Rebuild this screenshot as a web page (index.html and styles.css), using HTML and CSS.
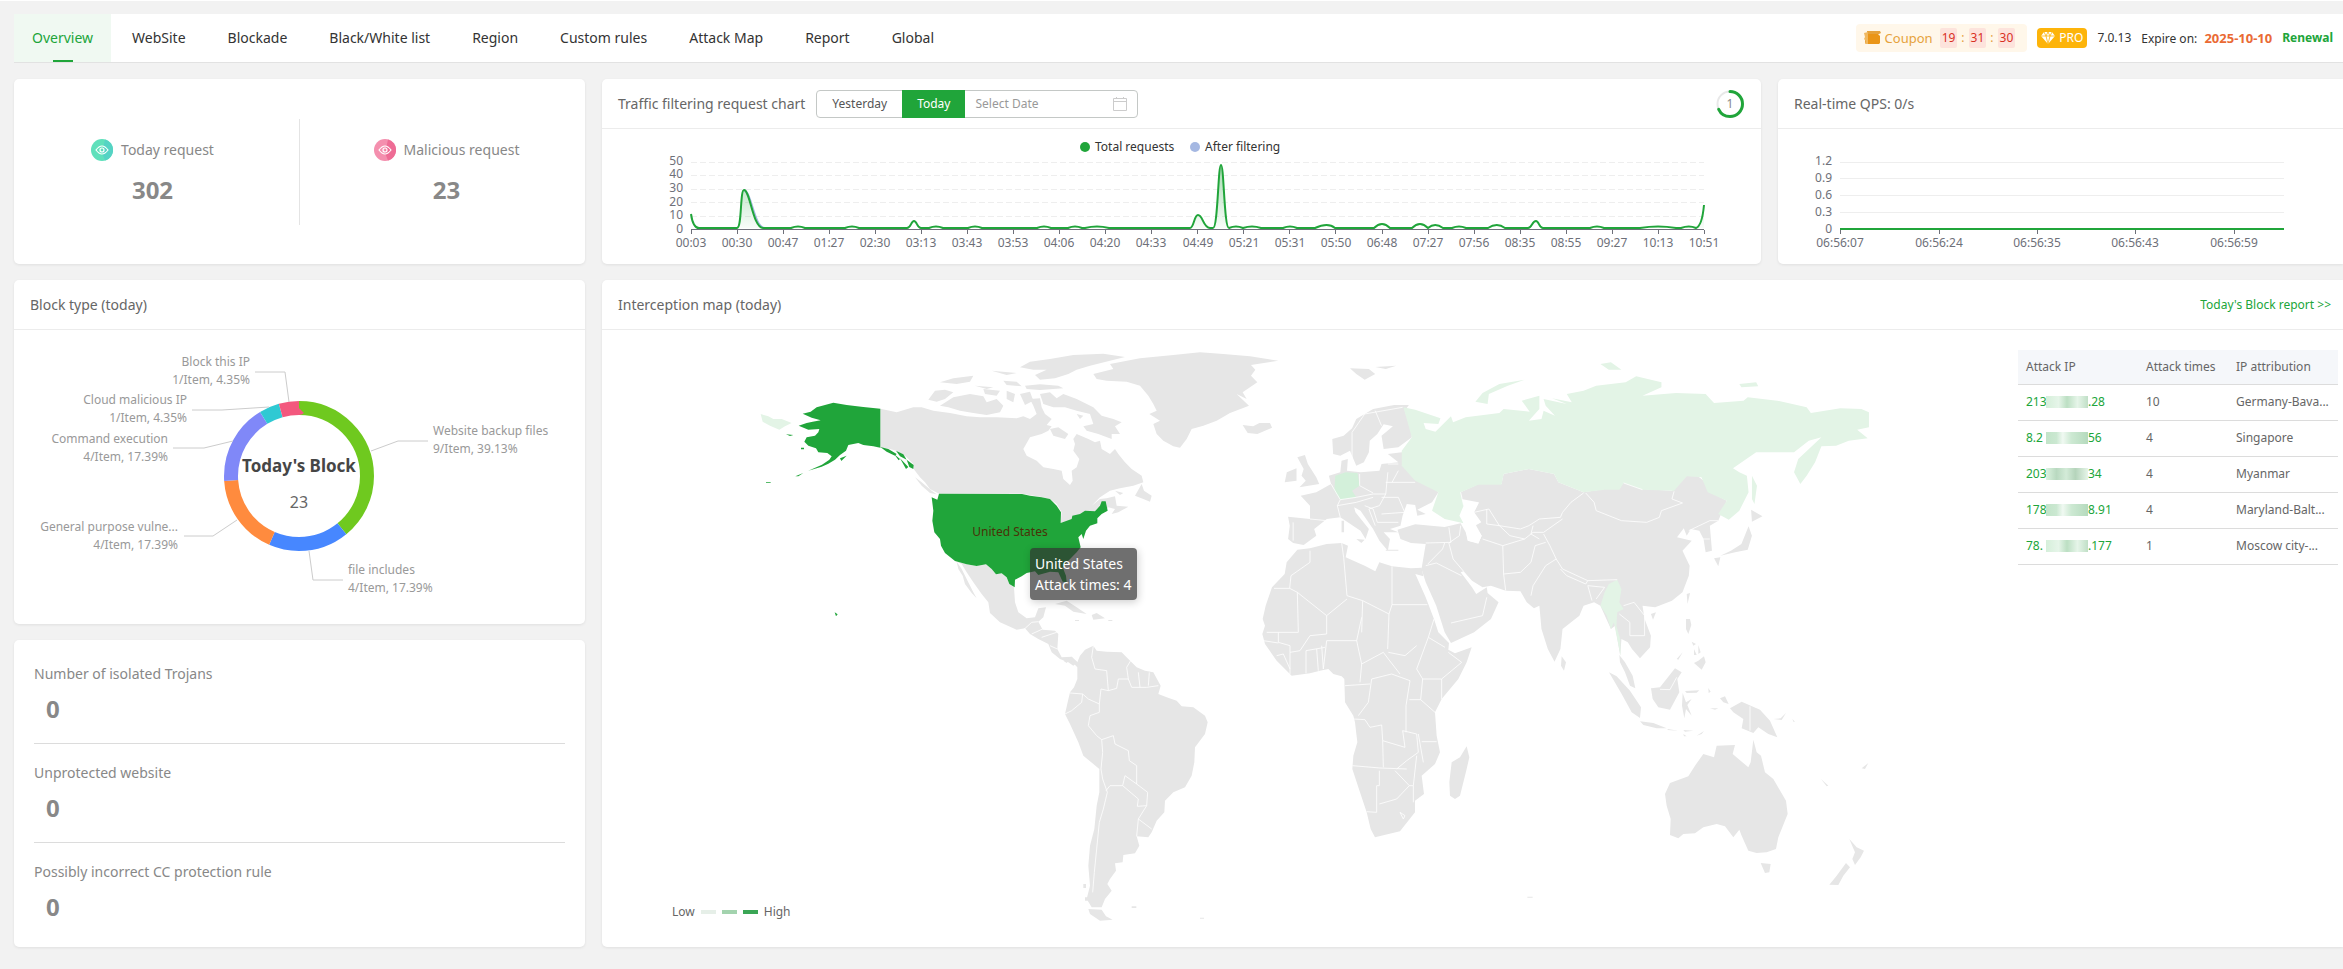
FILE: index.html
```html
<!DOCTYPE html>
<html lang="en">
<head>
<meta charset="utf-8">
<title>WAF Overview</title>
<link rel="stylesheet" href="styles.css">
</head>
<body>
<header class="topbar">
  <nav class="tabs">
    <a href="#" class="tab active">Overview</a>
    <a href="#" class="tab">WebSite</a>
    <a href="#" class="tab">Blockade</a>
    <a href="#" class="tab">Black/White list</a>
    <a href="#" class="tab">Region</a>
    <a href="#" class="tab">Custom rules</a>
    <a href="#" class="tab">Attack Map</a>
    <a href="#" class="tab">Report</a>
    <a href="#" class="tab">Global</a>
  </nav>
  <div class="license">
    <div class="coupon">
      <svg width="17" height="14" viewBox="0 0 17 14" aria-hidden="true"><path d="M1 3h2v9H1zM3 0h13l1 2-2 1H5L3 4z" fill="#e6a23c"/><path d="M0 2l4-1v12H1l1-3-2-2 1-2z" fill="#f0b860"/><path d="M4 3h10l2 2v7l-1 1H4z" fill="#ea9518"/></svg>
      <span class="coupon-name">Coupon</span>
      <span class="count">19</span><span>:</span><span class="count">31</span><span>:</span><span class="count">30</span>
    </div>
    <span class="pro"><svg width="14" height="12" viewBox="0 0 14 12" aria-hidden="true"><path d="M3 0h8l3 4-7 8-7-8z" fill="#fff"/><path d="M0 4h14M3 0l2 4 2 8 2-8 2-4M5 4l2-4 2 4" fill="none" stroke="#fdb40a" stroke-width=".8"/></svg>PRO</span>
    <span>7.0.13</span>
    <span class="expire">Expire on: <b class="date">2025-10-10</b></span>
    <a href="#" class="renew">Renewal</a>
  </div>
</header>

<main class="board">
  <section class="card totals">
    <div class="total">
      <div class="total-name">
        <svg width="22" height="22" viewBox="0 0 22 22" aria-hidden="true"><circle cx="11" cy="11" r="11" fill="#5fe0bb"/><path d="M14 .4a11 11 0 0 1 0 21.2L11 14z" fill="#55d3c4"/><path d="M5 11q6-8 12 0q-6 8-12 0z" fill="none" stroke="#fff" stroke-width="1.2"/><circle cx="11" cy="11" r="2" fill="none" stroke="#fff" stroke-width="1.2"/></svg>
        Today request
      </div>
      <div class="figure">302</div>
    </div>
    <div class="total">
      <div class="total-name">
        <svg width="22" height="22" viewBox="0 0 22 22" aria-hidden="true"><circle cx="11" cy="11" r="11" fill="#f48fae"/><path d="M14 .4a11 11 0 0 1 0 21.2L11 14z" fill="#ee6c95"/><path d="M5 11q6-8 12 0q-6 8-12 0z" fill="none" stroke="#fff" stroke-width="1.2"/><circle cx="11" cy="11" r="2" fill="none" stroke="#fff" stroke-width="1.2"/></svg>
        Malicious request
      </div>
      <div class="figure">23</div>
    </div>
  </section>

  <section class="card">
    <div class="card-head">
      <h2>Traffic filtering request chart</h2>
      <div class="range">
        <button type="button">Yesterday</button><button type="button" class="on">Today</button>
        <label class="date-field"><input type="text" placeholder="Select Date" aria-label="Select Date"><svg width="14" height="14" viewBox="0 0 14 14" aria-hidden="true"><path d="M.5 1.5h13v12H.5zM.5 4.5h13M3.500 0v2M10.500 0v2" fill="none" stroke="#ccc"/></svg></label>
      </div>
      <svg class="ring" width="28" height="28" viewBox="0 0 28 28"><circle cx="14" cy="14" r="12.500" fill="none" stroke="#e8e8e8" stroke-width="2"/><circle cx="14" cy="14" r="12.500" fill="none" stroke="#20a53a" stroke-width="3" stroke-linecap="round" pathLength="100" stroke-dasharray="68 100" transform="rotate(-90 14 14)"/><text x="14" y="18" text-anchor="middle" font-size="12" fill="#888">1</text></svg>
    </div>
    <svg class="chart" id="traffic" viewBox="602 129 1159 135">
      <defs><linearGradient id="fade" x1="0" y1="0" x2="0" y2="1"><stop offset="0" stop-color="#20a53a" stop-opacity=".4"/><stop offset="1" stop-color="#20a53a" stop-opacity=".03"/></linearGradient></defs>
      <circle cx="1085" cy="147" r="5" fill="#20a53a"/><text class="key" x="1095" y="151">Total requests</text>
      <circle cx="1195" cy="147" r="5" fill="#a5b8e2"/><text class="key" x="1205" y="151">After filtering</text>
      <path class="grid dashed" d="M691 162.500H1704M691 175.500H1704M691 189.500H1704M691 202.500H1704M691 216.500H1704"/>
      <g class="end"><text x="683" y="165">50</text><text x="683" y="178">40</text><text x="683" y="192">30</text><text x="683" y="206">20</text><text x="683" y="219">10</text><text x="683" y="233">0</text></g>
      <path d="M691 229.500H1704" stroke="#6e7079" fill="none"/>
      <path class="tick" d="M691.500 230v4M737.500 230v4M783.500 230v4M829.500 230v4M875.500 230v4M921.500 230v4M967.500 230v4M1013.500 230v4M1059.500 230v4M1105.500 230v4M1151.500 230v4M1197.500 230v4M1243.500 230v4M1289.500 230v4M1335.500 230v4M1382.500 230v4M1428.500 230v4M1474.500 230v4M1520.500 230v4M1566.500 230v4M1612.500 230v4M1658.500 230v4M1704.500 230v4"/>
      <path d="M738 228C742 228 741 190 744 190C750 190 753 228 763 228zM1190 228C1194 228 1194 216 1198 216C1203 216 1203 228 1210 228zM1214 228C1218 228 1218 165 1221 165C1224 165 1224 228 1228 228zM1696 228Q1702 228 1704 205V228z" fill="url(#fade)"/>
      <path d="M744 190C752 193 754 228 765 228" fill="none" stroke="#a5b8e2" stroke-width="2"/>
      <path d="M691 214Q693 228 699 228H737C742 228 740 190 744 190C750 190 753 228 763 228H791Q798 225 805 228H845Q852 225 859 228H907C911 228 911 221 914 221C917 221 917 228 921 228H929Q936 225 943 228H968Q975 225 982 228H1037Q1044 225 1051 228H1068Q1075 225 1082 228H1085Q1097 225 1109 228H1190C1194 228 1194 215 1198 215C1203 215 1203 228 1210 228H1213C1218 228 1218 165 1221 165C1224 165 1224 228 1229 228Q1236 225 1243 228Q1252 225 1261 228H1283Q1290 225 1297 228H1315Q1328 222 1335 228H1374Q1382 220 1390 228H1412Q1420 220 1428 228Q1435 222 1443 228H1452Q1459 225 1466 228H1488Q1497 222 1505 228H1528C1532 228 1532 221 1536 221C1539 221 1539 228 1543 228H1590Q1597 225 1604 228H1640Q1658 225 1676 228H1681Q1689 225 1696 228Q1702 226 1704 205" fill="none" stroke="#20a53a" stroke-width="2"/>
      <g class="mid"><text x="691" y="247">00:03</text><text x="737" y="247">00:30</text><text x="783" y="247">00:47</text><text x="829" y="247">01:27</text><text x="875" y="247">02:30</text><text x="921" y="247">03:13</text><text x="967" y="247">03:43</text><text x="1013" y="247">03:53</text><text x="1059" y="247">04:06</text><text x="1105" y="247">04:20</text><text x="1151" y="247">04:33</text><text x="1198" y="247">04:49</text><text x="1244" y="247">05:21</text><text x="1290" y="247">05:31</text><text x="1336" y="247">05:50</text><text x="1382" y="247">06:48</text><text x="1428" y="247">07:27</text><text x="1474" y="247">07:56</text><text x="1520" y="247">08:35</text><text x="1566" y="247">08:55</text><text x="1612" y="247">09:27</text><text x="1658" y="247">10:13</text><text x="1704" y="247">10:51</text></g>
    </svg>
  </section>

  <section class="card edge">
    <div class="card-head"><h2>Real-time QPS: 0/s</h2></div>
    <svg class="chart" viewBox="1778 129 565 135">
      <path class="grid" d="M1840 162.500H2284M1840 178.500H2284M1840 195.500H2284M1840 212.500H2284"/>
      <path d="M1840.500 230v4M1939.500 230v4M2037.500 230v4M2135.500 230v4M2234.500 230v4" class="tick"/>
      <path d="M1840 229H2284" stroke="#20a53a" stroke-width="2"/>
      <g class="end"><text x="1832" y="165">1.2</text><text x="1832" y="182">0.9</text><text x="1832" y="199">0.6</text><text x="1832" y="216">0.3</text><text x="1832" y="233">0</text></g>
      <g class="mid"><text x="1840" y="247">06:56:07</text><text x="1939" y="247">06:56:24</text><text x="2037" y="247">06:56:35</text><text x="2135" y="247">06:56:43</text><text x="2234" y="247">06:56:59</text></g>
    </svg>
  </section>

  <section class="card">
    <div class="card-head"><h2>Block type (today)</h2></div>
    <svg class="chart donut" viewBox="14 331 571 293">
      <g fill="none" stroke-width="14" transform="rotate(-90 299 477)">
        <circle cx="299" cy="477" r="68" pathLength="23" stroke="#6fc91f" stroke-dasharray="9 14"/>
        <circle cx="299" cy="477" r="68" pathLength="23" stroke="#4787ff" stroke-dasharray="4 19" stroke-dashoffset="-9"/>
        <circle cx="299" cy="477" r="68" pathLength="23" stroke="#ff8b3e" stroke-dasharray="4 19" stroke-dashoffset="-13"/>
        <circle cx="299" cy="477" r="68" pathLength="23" stroke="#8088f8" stroke-dasharray="4 19" stroke-dashoffset="-17"/>
        <circle cx="299" cy="477" r="68" pathLength="23" stroke="#2fc9d3" stroke-dasharray="1 22" stroke-dashoffset="-21"/>
        <circle cx="299" cy="477" r="68" pathLength="23" stroke="#f3587e" stroke-dasharray="1 22" stroke-dashoffset="-22"/>
      </g>
      <path d="M371 452L398 442H428M289 403L285 373H255M269 408L222 411H192M233 442L204 449H173M237 521L213 537H184M309 552L313 581H343" fill="none" stroke="#ccc"/>
      <text x="433" y="436">Website backup files</text><text x="433" y="454">9/Item, 39.13%</text>
      <text x="348" y="575">file includes</text><text x="348" y="593">4/Item, 17.39%</text>
      <g class="end"><text x="250" y="367">Block this IP</text><text x="250" y="385">1/Item, 4.35%</text>
      <text x="187" y="405">Cloud malicious IP</text><text x="187" y="423">1/Item, 4.35%</text>
      <text x="168" y="444">Command execution</text><text x="168" y="462">4/Item, 17.39%</text>
      <text x="178" y="532">General purpose vulne...</text><text x="178" y="550">4/Item, 17.39%</text></g>
      <g class="mid"><text class="hub" x="299" y="473">Today's Block</text><text class="hub-count" x="299" y="509">23</text></g>
    </svg>
  </section>

  <section class="card map-card edge">
    <div class="card-head"><h2>Interception map (today)</h2><a href="#" class="report">Today's Block report &gt;&gt;</a></div>
    <div class="map-body">
      <div class="map">
        <svg class="chart world" viewBox="602 331 1416 617">
          <!-- North America -->
          <g transform="translate(740 340) scale(.33333)">
            <path class="land" d="M421 209L470 220L520 205L545 205L580 215L630 222L680 232L720 235L770 235L830 238L850 232L870 240L890 225L880 200L870 180L900 178L905 205L915 225L935 240L920 258L935 262L925 275L905 285L870 295L850 330L860 350L890 365L910 385L940 390L965 395L970 420L990 438L998 425L995 395L1010 385L1018 360L1000 335L1005 315L1000 300L1010 285L1045 300L1065 310L1080 305L1085 330L1110 345L1125 330L1135 345L1155 370L1175 390L1205 410L1210 430L1180 440L1140 448L1110 455L1080 475L1055 500L1080 480L1100 478L1125 472L1130 500L1165 503L1135 520L1115 525L1125 510L1105 505L1090 520L1000 545L962 552L965 520L950 495L930 480L905 474L846 464L597 464L570 450L555 430L540 415L521 390L520 375L500 355L470 335L440 328L421 326Z
            M1185 470L1205 435L1212 455L1235 470L1230 488L1210 480ZM1125 455L1150 462L1140 468Z
            M565 182L585 155L615 152L640 160L615 180L590 188ZM600 200L640 175L690 165L730 172L740 190L770 180L790 200L780 220L740 228L700 222L660 215L625 205Z
            M600 130L640 118L700 110L690 128L650 135ZM705 140L760 145L740 150ZM755 95L830 102L800 108ZM790 125L830 128L845 142L800 138ZM730 150L780 155L770 170L735 165ZM800 155L825 165L820 190L800 180ZM840 165L870 158L880 185L855 198Z
            M855 140L900 136L955 140L970 148L900 153L860 150Z
            M840 85L870 68L930 60L1000 48L1090 44L1155 54L1110 65L1050 80L1010 92L985 105L945 118L900 122L885 108L920 92L880 92Z
            M900 165L930 160L950 178L970 165L1010 180L1060 205L1085 230L1120 240L1145 250L1125 262L1140 285L1115 285L1115 300L1075 285L1040 275L1030 262L1060 255L1050 225L1010 215L975 205L940 205L910 195Z
            M930 270L955 265L985 285L975 300L940 290ZM1010 225L1030 230L1020 240ZM525 415L545 430L575 455L590 466L570 462L545 440Z
            M1060 105L1120 90L1110 75L1200 58L1300 48L1380 40L1450 45L1530 52L1615 65L1533 78L1546 92L1533 110L1552 130L1508 160L1520 180L1490 165L1527 200L1470 222L1430 245L1390 260L1355 270L1340 300L1320 326L1300 322L1270 305L1250 285L1240 255L1260 245L1228 225L1250 215L1240 195L1225 170L1200 140L1160 128L1100 125L1070 120Z
            M645 666L680 676L710 681L738 676L755 690L768 706L785 703L800 715L808 735L822 745L825 790L835 820L860 838L885 835L895 808L918 805L910 835L895 848L908 872L945 875L955 885L952 930L965 955L995 953L1012 970L1000 980L985 970L960 960L935 940L925 915L895 900L870 885L855 868L830 872L780 850L750 822L745 790L725 765L700 730L680 700L665 675Z
            M650 668L665 690L680 720L700 760L710 778L695 762L675 735L668 710L655 690ZM945 795L980 785L1010 805L1040 825L1000 818L975 800ZM1055 828L1070 822L1095 838L1060 842ZM1005 843h12v3h-12zM1105 843h12v3h-12z"/>
            <path class="hot" d="M188 224L212 218L230 205L255 198L280 191L320 198L370 204L421 209L421 326L400 322L370 318L355 312L325 318L318 335L300 348L285 362L265 374L245 383L205 395L246 377L268 362L275 352L262 342L235 340L228 328L205 320L193 308L200 295L225 290L235 280L238 270L205 272L176 260L200 252L218 248L242 244L215 236Z
            M421 324L445 330L470 345L465 350L440 338ZM468 335L490 346L500 362L480 352ZM500 362L521 378L520 390L508 384ZM462 345L480 360L476 364ZM480 358L505 384L498 390ZM300 358L320 350L304 366ZM138 286L160 288L150 291ZM166 412L190 402L175 412ZM78 430h14v2h-14zM183 326h9v5h-9zM284 820L293 826L288 832Z
            M597 464L846 465L870 470L905 475L930 480L950 500L963 520L962 552L995 540L997 530L1020 525L1035 515L1065 517L1080 500L1085 487L1097 487L1103 515L1085 525L1072 538L1072 553L1050 560L1038 575L1030 600L1025 585L1015 595L1022 625L1010 640L985 665L968 685L978 710L980 730L968 728L955 700L930 698L895 708L885 697L860 702L845 712L825 722L824 745L808 735L800 715L785 703L768 706L755 690L738 676L710 681L680 676L645 666L615 642L603 620L600 600L583 580L577 545L580 515L575 475L592 482Z"/>
            <path class="cool" d="M62 225L85 232L100 240L125 240L155 252L135 262L118 272L90 260L68 248Z"/>
            <path class="edge-line" d="M850 873L875 850L895 848M875 885L908 870M905 895L950 880M930 920L952 930"/>
          </g>
          <!-- South America, Africa -->
          <g transform="translate(1000 620) scale(.33333)">
            <path class="land" d="M232 130L240 110L255 92L280 80L290 95L320 98L365 100L385 120L410 145L435 155L460 160L482 200L475 225L500 235L530 245L545 262L580 265L615 290L623 310L615 345L585 385L583 430L575 470L555 505L520 520L495 545L493 580L470 605L455 640L445 655L410 652L418 680L405 703L370 708L368 730L345 733L348 755L330 780L322 795L335 815L315 840L305 865L275 865L260 840L270 800L265 740L270 680L283 630L290 560L298 520L298 450L250 410L235 370L210 315L195 285L203 250L210 220L222 205L232 180L232 145L210 122L200 132L190 125L215 113Z
            M265 870L305 872L318 892L338 902L300 905L270 885ZM395 862h14v5h-14zM250 795h8v12h-8zM255 835h10v10h-10zM600 896h12v3h-12z
            M892 -208L930 -212L980 -225L1025 -228L1044 -220L1037 -185L1094 -160L1126 -143L1138 -170L1176 -158L1233 -152L1265 -154L1270 -128L1246 -135L1277 -65L1302 0L1315 40L1347 72L1345 92L1365 103L1415 85L1400 130L1375 180L1325 240L1305 280L1310 350L1320 400L1305 435L1265 470L1272 525L1245 545L1245 580L1200 637L1125 655L1112 630L1100 580L1080 520L1057 450L1060 410L1072 370L1065 310L1060 290L1035 250L1033 180L1025 172L1000 165L985 150L960 155L930 163L875 170L830 125L795 75L787 45L795 20L788 0L797 -40L816 -95L854 -135L860 -170Z
            M1400 382L1408 415L1400 450L1380 530L1365 540L1350 530L1348 490L1355 430L1380 415Z"/>
            <path class="edge-line" d="M303 450L308 480L322 520L310 570L298 610L290 690L283 760L278 820M303 450L308 400L305 362L340 350L345 375L385 395L388 425L410 440L410 495L375 470L368 500L330 500L318 515M368 500L415 540L412 562L440 560L443 520L410 495M440 560L415 600L410 652M415 600L455 630M305 362L290 350L265 320L270 290L298 280L298 255L265 240L248 225L210 222M298 255L303 210L325 215L320 155L285 150L275 115L280 80M325 215L350 208L355 180L385 180L395 205L440 205L475 200M385 180L380 145L392 125M420 205L415 160M445 200L448 160M195 285L215 275L245 250L248 225
            M1057 440L1140 447L1220 450M1138 455V500H1130V580L1100 578M1138 555L1190 540L1228 500L1185 455M1228 500L1240 500L1250 410M1240 500V550M1060 300L1095 302L1110 325L1145 318L1148 365L1150 445M1148 365L1215 385L1208 335L1250 345L1255 400L1220 425L1190 450M1255 345L1270 430M1265 368H1310M1218 340V260L1230 185L1175 165L1115 180L1105 250L1075 290M1228 242H1262L1305 280M1262 242L1268 180H1325V240M1268 180L1250 150L1285 55L1335 85M1325 180L1385 130L1345 100M1085 135L1150 100L1165 120L1200 165M1080 190L1085 135L1070 65M1035 200L1110 195M970 150L980 65H1070L1085 -5M1176 -158V-43H1282M1176 -43L1167 -15L1163 90M1088 -55L1085 40M1025 -228L1031 -185L1041 -70L1088 -55L1167 -15M980 -10L1041 -60M892 -80L980 -10M892 -80L895 40H800M980 -10V45L930 50M930 -205V-170L873 -130L869 -92H822M869 -92L892 -80M835 40V70L870 80V100L900 95L930 50M870 100V165M918 95V163M950 90L955 155M965 80L970 150M918 95L975 85M790 65L835 72M830 110L850 105L870 150M1165 100L1215 110L1250 80M1302 0L1285 55M1210 600L1200 580L1215 590Z"/>
          </g>
          <!-- Europe and Asia -->
          <g transform="translate(1230 340) scale(.42092 .33333)">
            <path class="land" d="M245 345L243 300L270 290L290 268L300 240L340 210L390 198L425 198L415 215L430 260L432 295L400 325L365 330L360 290L387 262L365 256L350 285L332 305L330 340L318 370L300 380L285 335L262 350Z
            M138 533L190 540L190 500L168 470L205 460L240 435L235 410L262 400L265 365L280 360L278 395L310 400L355 395L360 375L400 370L375 345L408 340L440 400L495 460L480 490L445 512L465 525L445 530L440 498L420 495L410 530L405 560L380 570L400 580L365 580L380 600L375 635L355 605L340 570L310 515L295 505L298 520L330 570L322 600L310 575L262 535L230 540L200 570L205 590L175 618L150 612L138 600L142 560Z
            M160 355L178 348L185 375L205 415L212 435L165 445L180 425L170 410L175 390ZM130 430L135 400L158 388L158 425ZM30 258L55 262L70 252L95 252L100 266L65 285L42 282ZM285 88L330 90L345 105L320 122L300 105ZM345 84L395 80L370 90ZM265 545h6v35h-6zM300 600L320 602L312 612ZM370 632h30v3h-30z
            M398 572L440 556L510 564L548 553L560 580L565 605L590 612L598 590L585 560L575 520L590 490L550 480L548 460L590 435L645 435L650 405L710 390L770 405L780 430L840 460L890 450L925 450L935 430L980 450L1050 455L1085 410L1110 410L1130 430L1135 455L1180 485L1160 545L1140 560L1145 635L1130 640L1125 600L1115 575L1095 570L1085 590L1078 568L1062 595L1097 605L1075 635L1092 680L1090 710L1075 760L1050 785L1010 805L980 800L985 840L1000 890L998 925L974 958L955 930L945 910L930 900L927 950L915 860L905 870L880 800L865 790L840 800L830 830L790 870L785 930L771 968L755 930L740 870L735 800L722 808L705 790L690 757L655 755L620 740L600 745L575 725L555 697L548 700L575 745L585 765L610 745L612 762L638 790L620 840L580 880L525 912L510 880L490 800L465 730L455 690L465 615L430 612L405 600Z
            M1238 512L1265 532L1240 548ZM1232 562L1240 590L1230 632L1200 640L1165 650L1190 635L1215 615ZM1150 658L1165 655L1160 682ZM1085 765L1093 762L1087 795ZM1000 825L1012 820L1005 842Z"/>
            <path class="cool" d="M412 205L440 212L500 238L495 255L460 252L465 270L488 278L525 232L530 250L560 235L640 222L650 210L712 218L693 185L735 170L735 210L710 245L740 240L745 215L772 230L750 200L745 180L800 195L765 178L812 190L800 165L840 155L870 140L940 130L965 112L1025 130L1025 145L980 170L1060 162L1130 165L1150 192L1220 185L1230 175L1300 185L1370 205L1380 222L1450 208L1500 210L1518 220V265L1490 272L1515 298L1470 305L1440 320L1405 322L1390 370L1370 410L1355 435L1340 400L1350 360L1405 295L1375 305L1340 340L1250 340L1195 388L1210 400L1228 410L1232 460L1210 515L1185 542L1160 525L1180 485L1135 460L1120 415L1085 412L1055 455L980 452L935 432L925 452L890 452L840 460L780 430L770 405L710 390L650 405L645 437L590 437L548 460L555 500L545 530L555 553L510 540L480 515L495 460L440 425L408 380V335L432 295Z
            M1240 410L1252 440L1246 495L1240 480ZM583 188L600 162L640 135L700 122L660 140L615 165L612 195ZM880 75L905 70L930 92L900 92ZM1210 135L1250 130L1255 142L1215 145Z"/>
            <path class="cool" d="M920 722L930 750L925 790L935 810L920 820L918 860L927 900L928 950L920 900L912 850L905 870L895 830L880 800L890 760L900 735Z"/>
            <path class="warm" d="M250 410L275 400L303 402L308 440L290 455L300 475L262 482L248 455Z"/>
            <path d="M565 495L592 490L580 520L597 550L582 560L598 590L590 614L565 605L560 570L548 530Z" fill="#fff"/>
            <path class="edge-line" d="M845 462L865 490L870 515L930 545L990 550L1020 535L1025 515L1075 492L1050 480L1055 457M840 462L810 490L790 520L785 535L735 540L710 560L690 570L640 560L615 510L580 520M610 510V555L640 560L665 590L700 600L720 580L745 580L790 540M745 585L760 620L775 660L790 690L850 725L920 722M655 755L650 705L690 700L715 670L725 620L750 610M715 770L720 740L750 680L775 660M650 705L648 620L600 600M648 620L700 600M720 560L715 585L735 600M555 697L530 660L520 612L545 590L548 560M465 680L490 672L550 710M470 675L505 630L510 612M525 852L600 830L610 775M465 612L525 610L520 565M785 690L800 710L845 735L850 725M850 740L860 785M850 740L890 745L870 780M935 800L960 790L985 830L985 890M925 825L950 850V890H985M1090 575L1140 545L1160 545M1120 600H1140
            M190 540L230 545M150 550V605M240 435L262 482L255 500L262 535M262 482L300 475L340 465L370 465L375 400M308 405V440L340 462M370 430H440M370 465L355 500L330 510L345 560M360 475H400L415 520L360 525M300 490L340 475M375 375H400M385 430L400 395M290 370V280L320 225L410 205M360 260L345 215M548 460L555 500M935 432L980 452M255 500L300 490M320 500L340 510L350 550L400 550"/>
          </g>
          <!-- South-east Asia and Oceania -->
          <g transform="translate(1440 620) scale(.33333)">
            <path class="land" d="M365 112L378 130L372 155L363 140ZM507 160L530 172L570 215L603 265L600 297L575 280L545 225ZM600 307L640 312L680 328L650 328L610 318ZM538 108L555 130L578 170L586 208L570 200L555 160L540 130ZM633 208L660 205L705 148L725 160L712 180L718 220L690 272L655 265L638 240ZM728 222L738 250L755 240L742 258L755 290L738 270L733 298L726 260ZM735 216L778 214L770 221L740 222ZM870 268L905 248L960 272L990 305L1012 355L985 345L955 325L940 342L905 328L910 300L880 280ZM840 238L855 232L866 255L850 250ZM1000 300L1022 298L1038 282L1025 303ZM738 0L750 0L754 18L745 45L738 30ZM775 125L792 112L797 130L785 152L762 132ZM755 68L768 75L760 80ZM775 78L782 100L775 105ZM762 90L770 108L762 108ZM710 120L728 100L715 122ZM683 330L715 335L683 333ZM730 333L760 335L735 338ZM730 345L740 352L732 352ZM770 350L792 336L785 345ZM805 207L812 218L806 222ZM810 268L835 268L825 272ZM1057 300L1065 308L1060 308Z
            M690 648L692 600L680 560L675 525L690 492L745 472L765 440L790 405L822 415L830 380L885 378L878 405L925 445L932 430L940 362L950 400L963 410L975 460L1000 480L1038 545L1043 585L1015 655L1008 690L980 700L950 702L925 695L905 650L898 632L880 655L855 622L830 615L790 625L765 643L730 645L715 658ZM962 732L992 735L988 760L975 762ZM1228 660L1250 685L1272 695L1262 715L1245 738L1237 720L1245 700ZM1218 732L1230 745L1210 770L1195 798L1168 797L1190 770ZM1143 480L1165 500L1160 502ZM1265 448L1285 432L1275 450ZM262 833h16v3h-16z"/>
            <path class="edge-line" d="M660 211L690 212L710 175M930 262V335"/>
          </g>
          <text class="country" x="1010" y="537" text-anchor="middle">United States</text>
        </svg>
        <div class="tip">United States<br>Attack times: 4</div>
        <div class="scale"><span>Low</span><i class="s1"></i><i class="s2"></i><i class="s3"></i><span>High</span></div>
      </div>
      <table class="attacks">
        <colgroup><col class="c-ip"><col class="c-times"><col></colgroup>
        <thead><tr><th>Attack IP</th><th>Attack times</th><th>IP attribution</th></tr></thead>
        <tbody>
          <tr><td><a href="#" class="ip"><span class="ip-start">213</span><span class="mask m1"></span>.28</a></td><td>10</td><td>Germany-Bava...</td></tr>
          <tr><td><a href="#" class="ip"><span class="ip-start">8.2</span><span class="mask m2"></span>56</a></td><td>4</td><td>Singapore</td></tr>
          <tr><td><a href="#" class="ip"><span class="ip-start">203</span><span class="mask m3"></span>34</a></td><td>4</td><td>Myanmar</td></tr>
          <tr><td><a href="#" class="ip"><span class="ip-start">178</span><span class="mask m2"></span>8.91</a></td><td>4</td><td>Maryland-Balt...</td></tr>
          <tr><td><a href="#" class="ip"><span class="ip-start">78.</span><span class="mask m1"></span>.177</a></td><td>1</td><td>Moscow city-...</td></tr>
        </tbody>
      </table>
    </div>
  </section>

  <section class="card risks">
    <div class="risk"><div>Number of isolated Trojans</div><div class="figure">0</div></div>
    <div class="risk"><div>Unprotected website</div><div class="figure">0</div></div>
    <div class="risk"><div>Possibly incorrect CC protection rule</div><div class="figure">0</div></div>
  </section>
</main>
</body>
</html>
```
FILE: styles.css
```css
* { box-sizing: border-box; }
body {
  margin: 0;
  padding: 13px 0 16px 14px;
  background: #f2f2f2;
  border-top: 1px solid #fff;
  color: #666;
  font: 14px/20px "Noto Sans", "Open Sans", sans-serif;
}
a { text-decoration: none; color: #20a53a; }
.topbar {
  display: flex;
  justify-content: space-between;
  align-items: center;
  height: 49px;
  background: #fff;
  border-bottom: 1px solid #e2e2e2;
}
.tabs { display: flex; height: 100%; }
.tab { position: relative; padding: 0 21px; line-height: 47px; color: #333; }
.tab.active { padding: 0 18px; color: #20a53a; background: #f0f9f2; }
.tab.active::after {
  content: "";
  position: absolute;
  left: 50%;
  bottom: 0;
  width: 20px;
  height: 2px;
  margin-left: -10px;
  background: #20a53a;
}
.license { display: flex; align-items: center; gap: 10px; padding-right: 10px; font-size: 12px; color: #333; }
.coupon {
  display: flex;
  align-items: center;
  gap: 4px;
  height: 28px;
  padding: 0 12px 0 8px;
  background: #fff7ea;
  color: #e6a23c;
  border-radius: 4px;
}
.coupon > span { flex: none; }
.coupon-name { padding-right: 3px; font-size: 13px; }
.count { padding: 0 2px; background: #fde3dc; color: #d9301f; border-radius: 2px; }
.pro {
  display: flex;
  align-items: center;
  gap: 4px;
  height: 20px;
  padding: 0 4px;
  border-radius: 4px;
  background: #fdb40a;
  color: #fff;
}
.expire .date { margin-left: 4px; font-size: 13px; color: #ea6a34; }
.renew { font-weight: 700; }

.board {
  display: grid;
  grid-template-columns: 571fr 1159fr 565fr;
  gap: 16px 17px;
  padding-top: 16px;
}
.card { min-width: 0; background: #fff; border-radius: 5px; box-shadow: 0 1px 3px rgba(0, 0, 0, .08); }
.edge { border-radius: 5px 0 0 5px; }
.card-head {
  display: flex;
  align-items: center;
  height: 50px;
  padding: 0 12px 0 16px;
  border-bottom: 1px solid #ececec;
}
h2 { margin: 0; font-size: 14px; font-weight: 400; }
.chart { display: block; width: 100%; height: auto; font-size: 12px; fill: #6e7079; }
.end { text-anchor: end; }
.mid { text-anchor: middle; }
.key { fill: #333; }
.grid { fill: none; stroke: #eeeeee; }
.dashed { stroke-dasharray: 6 3; }
.tick { fill: none; stroke: #6e7079; }

.totals { display: flex; align-items: center; }
.total {
  flex: 1;
  display: flex;
  flex-direction: column;
  align-items: center;
  justify-content: center;
  gap: 14px;
  height: 106px;
  padding-right: 8px;
}
.total + .total { padding: 0 0 0 8px; border-left: 1px solid #e4e4e4; }
.total-name { display: flex; align-items: center; gap: 8px; color: #888; }
.figure { font-size: 24px; line-height: 30px; font-weight: 700; color: #888; }

.range { display: flex; height: 28px; margin-left: 11px; border: 1px solid #c4c8c6; border-radius: 4px; }
.range button { margin: 0; padding: 0 15px; border: 0; background: none; color: #555; font: inherit; font-size: 12px; }
.range .on { margin: -1px 0; background: #20a53a; color: #fff; padding: 0 15px; }
.date-field { display: flex; align-items: center; width: 172px; padding: 0 10px; }
.date-field input { flex: 1; min-width: 0; padding: 0; border: 0; outline: 0; font: inherit; font-size: 12px; }
.date-field input::placeholder { color: #999; }
.ring { margin-left: auto; margin-right: 5px; }

.donut { fill: #999; }
.hub { font-size: 17px; font-weight: 700; fill: #464646; }
.hub-count { font-size: 16px; fill: #666; }

.map-card { grid-column: 2 / 4; grid-row: 2 / 4; }
.report { margin-left: auto; font-size: 12px; }
.map-body { display: flex; align-items: flex-start; padding-right: 5px; }
.map { position: relative; flex: 1; min-width: 0; }
.land { fill: #e6e6e6; }
.hot { fill: #20a53a; }
.cool { fill: #e3f4e6; }
.warm { fill: #d3f0da; }
.edge-line { fill: none; stroke: #fff; stroke-width: 1px; stroke-opacity: .8; vector-effect: non-scaling-stroke; stroke-linejoin: round; }
.country { fill: #4a3208; }
.tip {
  position: absolute;
  left: 428px;
  top: 218px;
  padding: 5px;
  border-radius: 4px;
  background: rgba(50, 50, 50, .7);
  color: #fff;
  line-height: 21px;
  box-shadow: 1px 2px 8px rgba(0, 0, 0, .2);
}
.scale { position: absolute; left: 70px; bottom: 25px; display: flex; align-items: center; gap: 6px; font-size: 12px; }
.scale i { width: 15px; height: 4px; }
.s1 { background: #e6efe8; }
.s2 { background: #a3d3ae; }
.s3 { background: #3aa655; }

.attacks { flex: none; width: 320px; margin-top: 20px; table-layout: fixed; border-collapse: collapse; font-size: 12px; }
.attacks col.c-ip { width: 120px; }
.attacks col.c-times { width: 90px; }
.attacks th, .attacks td { height: 36px; padding: 0 0 0 8px; text-align: left; font-weight: 400; white-space: nowrap; border-bottom: 1px solid #dcdcdc; }
.attacks th { height: 34px; background: #f5f7fa; }
.ip { display: flex; align-items: center; }
.ip-start { width: 20px; }
.mask { width: 42px; height: 12px; }
.m1 { background: linear-gradient(90deg, #d5efda, #e6f5e9 30%, #bcdfc3 50%, #e6f5e9 75%, #c0dfc6); }
.m2 { background: linear-gradient(90deg, #c2e4c9, #cbe8d1 25%, #f0f9f2 40%, #cde9d3 60%, #b5dabd); }
.m3 { background: linear-gradient(90deg, #dcf3e0, #b9d9c0 25%, #d3ebd8 48%, #b5d4bb 70%, #e6f5e9); }

.risks { padding: 5px 20px 5px; }
.risk { height: 99px; padding-top: 19px; color: #888; border-bottom: 1px solid #dcdcdc; }
.risk:last-child { border-bottom: 0; }
.risk .figure { padding: 10px 12px 0; }
```
